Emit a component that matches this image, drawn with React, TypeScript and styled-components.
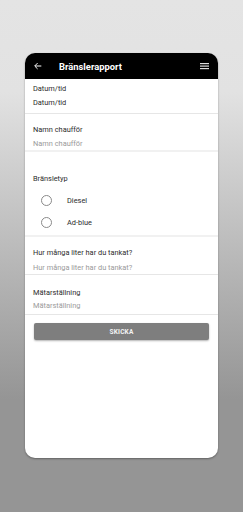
import styled, { createGlobalStyle } from "styled-components";

const GlobalStyle = createGlobalStyle`
  body {
    margin: 0;
    font-family: Roboto, "Liberation Sans", sans-serif;
  }
`;

const Page = styled.div`
  min-height: 512px;
  padding-top: 53px;
  box-sizing: border-box;
  background: linear-gradient(#e4e4e4 0%, #e2e2e2 18%, #959595 78%, #959595 100%);
`;

const Phone = styled.div`
  margin-left: 25px;
  width: 193px;
  height: 405px;
  background: #fff;
  border-radius: 10px;
  overflow: hidden;
  box-shadow: 0 1px 2px rgba(0, 0, 0, 0.35);
  display: flex;
  flex-direction: column;
`;

const Header = styled.div`
  height: 26px;
  background: #000;
  display: flex;
  align-items: center;
  padding: 0 9px 0 8px;
  color: #fff;
`;

const Title = styled.div`
  flex: 1;
  margin-left: 16px;
  font-size: 9.4px;
  font-weight: 700;
`;

const Field = styled.div<{ $pt: number; $pb: number; $band?: boolean }>`
  padding: ${(p) => p.$pt}px 8px ${(p) => p.$pb}px 8px;
  border-bottom: ${(p) => (p.$band ? "2px solid #f1f1f1" : "1px solid #e6e6e6")};
  display: flex;
  flex-direction: column;
`;

const Label = styled.div`
  font-size: 7.4px;
  line-height: 12px;
  color: #2c2c2c;
`;

const Value = styled.div<{ $muted?: boolean; $gap?: number }>`
  font-size: 7.4px;
  line-height: 12px;
  margin-top: ${(p) => p.$gap ?? 2}px;
  color: ${(p) => (p.$muted ? "#9a9a9a" : "#2c2c2c")};
`;

const RadioRow = styled.label`
  display: flex;
  align-items: center;
  height: 22px;
  padding-left: 8px;
  font-size: 7.4px;
  color: #2c2c2c;
`;

const Circle = styled.span`
  width: 9px;
  height: 9px;
  border: 1px solid #8a8a8a;
  border-radius: 50%;
  margin-right: 15px;
`;

const Button = styled.button`
  margin: 8px 9px 0 9px;
  height: 17px;
  border: none;
  border-radius: 2px;
  background: #7e7e7e;
  box-shadow: 0 1px 2px rgba(0, 0, 0, 0.3);
  color: #f4f4f4;
  font-family: Roboto, "Liberation Sans", sans-serif;
  font-size: 6.5px;
  font-weight: 700;
  letter-spacing: 0.2px;
  padding: 0;
`;

const BackIcon = () => (
  <svg width="10" height="10" viewBox="0 0 24 24" fill="none" stroke="#fff" strokeWidth="2.4">
    <path d="M20 12H5M11 5l-7 7 7 7" />
  </svg>
);

const MenuIcon = () => (
  <svg width="9" height="8" viewBox="0 0 9 8" fill="#ddd">
    <rect x="0" y="1" width="9" height="1.2" />
    <rect x="0" y="3.5" width="9" height="1.2" />
    <rect x="0" y="6" width="9" height="1.2" />
  </svg>
);

export default function App() {
  return (
    <Page>
      <GlobalStyle />
      <Phone>
        <Header>
          <BackIcon />
          <Title>Bränslerapport</Title>
          <MenuIcon />
        </Header>
        <Field $pt={4} $pb={4}>
          <Label>Datum/tid</Label>
          <Value>Datum/tid</Value>
        </Field>
        <Field $pt={10} $pb={0} $band>
          <Label>Namn chaufför</Label>
          <Value $muted>Namn chaufför</Value>
        </Field>
        <Field $pt={21} $pb={2} $band>
          <Label>Bränsletyp</Label>
          <div style={{ height: 4 }} />
          <RadioRow>
            <Circle />
            Diesel
          </RadioRow>
          <RadioRow>
            <Circle />
            Ad-blue
          </RadioRow>
        </Field>
        <Field $pt={10} $pb={0}>
          <Label>Hur många liter har du tankat?</Label>
          <Value $muted $gap={3}>Hur många liter har du tankat?</Value>
        </Field>
        <Field $pt={12} $pb={2}>
          <Label>Mätarställning</Label>
          <Value $muted $gap={1}>Mätarställning</Value>
        </Field>
        <Button>SKICKA</Button>
      </Phone>
    </Page>
  );
}
